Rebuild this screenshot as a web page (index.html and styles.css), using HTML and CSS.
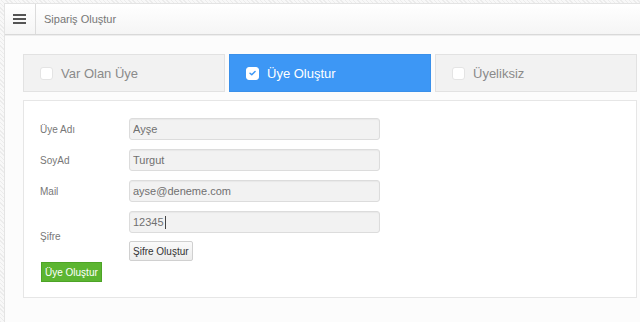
FILE: index.html
```html
<!DOCTYPE html>
<html lang="tr">
<head>
<meta charset="utf-8">
<title>Sipariş Oluştur</title>
<link rel="stylesheet" href="styles.css">
</head>
<body>
<div class="page">
  <header class="topbar">
    <div class="menu-cell">
      <span class="burger"><i></i><i></i><i></i></span>
    </div>
    <div class="title">Sipariş Oluştur</div>
  </header>
  <main class="content">
    <div class="tabs">
      <div class="tab"><span class="cb"></span>Var Olan Üye</div>
      <div class="tab active"><span class="cb checked"><svg viewBox="0 0 12 12" width="12" height="12"><path d="M3.3 6.2 L5.2 8 L8.8 4.3" fill="none" stroke="#3d97f5" stroke-width="1.6" stroke-linecap="round" stroke-linejoin="round"/></svg></span>Üye Oluştur</div>
      <div class="tab"><span class="cb"></span>Üyeliksiz</div>
    </div>
    <section class="panel">
      <div class="row">
        <label class="lbl">Üye Adı</label>
        <div class="field"><input class="inp" type="text" value="Ayşe"></div>
      </div>
      <div class="row">
        <label class="lbl">SoyAd</label>
        <div class="field"><input class="inp" type="text" value="Turgut"></div>
      </div>
      <div class="row">
        <label class="lbl">Mail</label>
        <div class="field"><input class="inp" type="text" value="ayse@deneme.com"></div>
      </div>
      <div class="row">
        <label class="lbl">Şifre</label>
        <div class="field">
          <div class="inp fake">12345<span class="caret"></span></div>
          <button class="btn-gray" type="button">Şifre Oluştur</button>
        </div>
      </div>
      <button class="btn-green" type="button">Üye Oluştur</button>
    </section>
  </main>
</div>
</body>
</html>
```
FILE: styles.css
```css
html, body {
  margin: 0;
  padding: 0;
}
body {
  width: 640px;
  height: 322px;
  overflow: hidden;
  font-family: "Liberation Sans", Arial, Helvetica, sans-serif;
  background: repeating-linear-gradient(45deg, #ececec 0 1px, #f8f8f8 1px 3px);
}
.page {
  margin: 3px 0 0 4px;
  height: 319px;
  background: #fcfcfc;
  border-left: 1px solid #e4e4e4;
  border-top: 1px solid #e4e4e4;
  box-sizing: border-box;
}
.topbar {
  display: flex;
  height: 30px;
  background: linear-gradient(#ffffff, #f5f5f5);
  border-bottom: 1px solid #d9d9d9;
  box-shadow: 0 1px 0 #eeeeee;
}
.menu-cell {
  width: 30px;
  border-right: 1px solid #dcdcdc;
  display: flex;
  align-items: center;
  justify-content: center;
}
.burger {
  display: flex;
  flex-direction: column;
  gap: 2px;
  width: 13px;
  margin-left: -1px;
}
.burger i {
  display: block;
  height: 2px;
  background: #555;
}
.title {
  display: flex;
  align-items: center;
  padding-left: 8px;
  font-size: 11px;
  color: #777777;
}
.content {
  padding: 19px 3px 0 18px;
}
.tabs {
  display: flex;
  gap: 4px;
}
.tab {
  flex: 1;
  height: 38px;
  box-sizing: border-box;
  display: flex;
  align-items: center;
  padding-left: 16px;
  background: #f2f2f2;
  border: 1px solid #e2e2e2;
  font-size: 13px;
  color: #8a8a8a;
}
.tab.active {
  background: #3d97f5;
  border-color: #3a90ea;
  color: #ffffff;
}
.cb {
  width: 11px;
  height: 11px;
  border-radius: 3px;
  background: #ffffff;
  border: 1px solid #e4e4e4;
  margin-right: 8px;
  display: flex;
  align-items: center;
  justify-content: center;
}
.cb.checked {
  border-color: #ffffff;
}
.panel {
  margin-top: 8px;
  height: 198px;
  box-sizing: border-box;
  background: #ffffff;
  border: 1px solid #e6e6e6;
  padding: 17px 16px 0 16px;
}
.row {
  display: flex;
  align-items: center;
  margin-bottom: 9px;
}
.row:nth-child(4) {
  margin-bottom: 1px;
}
.lbl {
  width: 89px;
  font-size: 10px;
  color: #777777;
}
.field {
  display: flex;
  flex-direction: column;
  align-items: flex-start;
  gap: 8px;
}
.inp {
  width: 251px;
  height: 22px;
  box-sizing: border-box;
  border: 1px solid #dcdcdc;
  border-radius: 3px;
  background: #f2f2f2;
  padding: 0 0 0 3px;
  font-family: "Liberation Sans", Arial, sans-serif;
  font-size: 11px;
  color: #707070;
  outline: none;
  box-shadow: inset 0 1px 1px #e8e8e8;
}
.fake {
  display: flex;
  align-items: center;
}
.caret {
  display: inline-block;
  width: 1px;
  height: 13px;
  background: #444;
  margin-left: 1px;
}
.btn-gray {
  height: 20px;
  padding: 0 3px;
  font-family: "Liberation Sans", Arial, sans-serif;
  font-size: 10px;
  color: #333;
  background: linear-gradient(#fafafa, #ececec);
  border: 1px solid #d0d0d0;
  border-radius: 2px;
}
.btn-green {
  display: block;
  height: 20px;
  margin-left: 1px;
  padding: 0 3px;
  font-family: "Liberation Sans", Arial, sans-serif;
  font-size: 10px;
  color: #ffffff;
  background: #5cb531;
  border: 1px solid #4da426;
  border-radius: 0;
}
```
